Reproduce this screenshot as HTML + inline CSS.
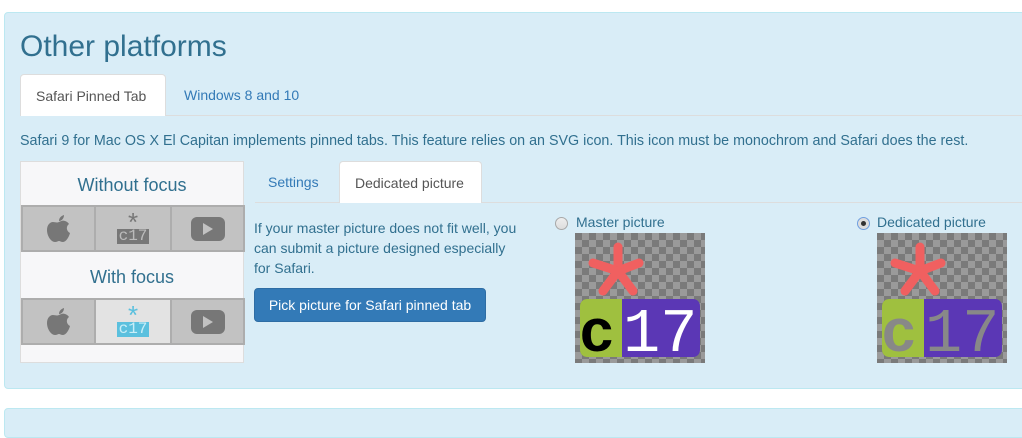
<!DOCTYPE html>
<html><head><style>
*{box-sizing:border-box;margin:0;padding:0}
body{width:1022px;height:414px;background:#fff;font-family:"Liberation Sans",sans-serif;position:relative;overflow:hidden;color:#31708f}
.a{position:absolute}
.panel{left:4px;top:12px;width:1030px;height:377px;background:#d9edf7;border:1px solid #bce8f1;border-radius:4px}
.panel2{left:4px;top:408px;width:1030px;height:30px;background:#d9edf7;border:1px solid #bce8f1;border-radius:4px}
.chk{background-color:#7a7a7a;background-image:linear-gradient(45deg,#9a9a9a 25%,transparent 25%,transparent 75%,#9a9a9a 75%),linear-gradient(45deg,#9a9a9a 25%,transparent 25%,transparent 75%,#9a9a9a 75%);background-size:14px 14px;background-position:0 0,7px 7px;width:130px;height:130px}
.cell{top:0;height:47px;background:#c2c2c2;border:2px solid #adadad;display:flex;align-items:center;justify-content:center}
.radio{width:13px;height:13px;border-radius:50%;border:1px solid #a8a8a8;background:linear-gradient(#eee,#ddd)}
</style></head><body>
<div class="a panel"></div>
<div class="a panel2"></div>
<div class="a" style="left:20px;top:30px;font-size:30px;color:#31708f">Other platforms</div>
<div class="a" style="left:20px;top:115px;width:1010px;height:1px;background:#ddd"></div>
<div class="a" style="left:20px;top:74px;width:146px;height:42px;background:#fff;border:1px solid #ddd;border-bottom:none;border-radius:4px 4px 0 0;font-size:14px;color:#555;padding:13px 0 0 15px">Safari Pinned Tab</div>
<div class="a" style="left:184px;top:87px;font-size:14px;color:#337ab7">Windows 8 and 10</div>
<div class="a" style="left:20px;top:133px;font-size:14.3px;white-space:nowrap">Safari 9 for Mac OS X El Capitan implements pinned tabs. This feature relies on an SVG icon. This icon must be monochrom and Safari does the rest.</div>

<div class="a" style="left:20px;top:161px;width:224px;height:202px;background:#f7f7f9;border:1px solid #ddd">
 <div class="a" style="left:0;top:13px;width:222px;text-align:center;font-size:18px">Without focus</div>
 <div class="a" style="left:0;top:43px;width:222px;height:48px">
  <div class="a cell" style="left:0;width:75px"><svg width="26" height="30" viewBox="0 0 26 30"><path fill="#777" d="M13 8c2-1 4-2 6-1 3 1 4 3 4 3-3 2-3 7 1 9-1 4-4 9-7 9-2 0-3-1-4-1s-2 1-4 1C5 28 1 22 1 16c0-5 3-8 6-8 2 0 4 1 6 0zM13 7c0-3 2-5 5-6 0 3-2 6-5 6z"/></svg></div>
  <div class="a cell" style="left:73px;width:78px;flex-direction:column"><div style="color:#777;font-size:26px;line-height:16px;height:15px">*</div><div style="background:#777;color:#bbb;font:16px 'Liberation Mono',monospace;padding:0 2px;line-height:15px">c17</div></div>
  <div class="a cell" style="left:149px;width:75px"><div style="width:34px;height:24px;background:#777;border-radius:6px;display:flex;align-items:center;justify-content:center"><div style="width:0;height:0;border-left:10px solid #c2c2c2;border-top:6px solid transparent;border-bottom:6px solid transparent"></div></div></div>
 </div>
 <div class="a" style="left:0;top:105px;width:222px;text-align:center;font-size:18px">With focus</div>
 <div class="a" style="left:0;top:136px;width:222px;height:48px">
  <div class="a cell" style="left:0;width:75px"><svg width="26" height="30" viewBox="0 0 26 30"><path fill="#777" d="M13 8c2-1 4-2 6-1 3 1 4 3 4 3-3 2-3 7 1 9-1 4-4 9-7 9-2 0-3-1-4-1s-2 1-4 1C5 28 1 22 1 16c0-5 3-8 6-8 2 0 4 1 6 0zM13 7c0-3 2-5 5-6 0 3-2 6-5 6z"/></svg></div>
  <div class="a cell" style="left:73px;width:78px;flex-direction:column;background:#e3e3e3"><div style="color:#5bc0de;font-size:26px;line-height:16px;height:15px">*</div><div style="background:#5bc0de;color:#c8eef8;font:16px 'Liberation Mono',monospace;padding:0 2px;line-height:15px">c17</div></div>
  <div class="a cell" style="left:149px;width:75px"><div style="width:34px;height:24px;background:#777;border-radius:6px;display:flex;align-items:center;justify-content:center"><div style="width:0;height:0;border-left:10px solid #c2c2c2;border-top:6px solid transparent;border-bottom:6px solid transparent"></div></div></div>
 </div>
</div>

<div class="a" style="left:255px;top:202px;width:780px;height:1px;background:#ddd"></div>
<div class="a" style="left:268px;top:174px;font-size:14px;color:#337ab7">Settings</div>
<div class="a" style="left:339px;top:161px;width:143px;height:42px;background:#fff;border:1px solid #ddd;border-bottom:none;border-radius:4px 4px 0 0;font-size:14px;color:#555;padding:13px 0 0 15px">Dedicated picture</div>
<div class="a" style="left:254px;top:218px;width:290px;font-size:14px;line-height:20px;white-space:nowrap">If your master picture does not fit well, you<br>can submit a picture designed especially<br>for Safari.</div>
<div class="a" style="left:254px;top:288px;width:232px;height:34px;background:#337ab7;border:1px solid #2e6da4;border-radius:4px;color:#fff;font-size:14px;text-align:center;line-height:32px">Pick picture for Safari pinned tab</div>

<div class="a radio" style="left:555px;top:217px"></div>
<div class="a" style="left:576px;top:214px;font-size:14px">Master picture</div>
<div class="a radio" style="left:857px;top:217px;border-color:#6f9fe0;background:#ddd"><div style="width:5px;height:5px;border-radius:50%;background:#333;margin:3px"></div></div>
<div class="a" style="left:877px;top:214px;font-size:14px">Dedicated picture</div>

<div class="a chk" style="left:575px;top:233px">
 <svg width="130" height="130" viewBox="0 0 130 130"><g stroke="#f06060" stroke-width="9" stroke-linecap="round"><line x1="43" y1="14" x2="43" y2="38"/><line x1="43" y1="38" x2="18" y2="30"/><line x1="43" y1="38" x2="64" y2="30"/><line x1="43" y1="38" x2="28" y2="58"/><line x1="43" y1="38" x2="58" y2="58"/></g>
 <rect x="5" y="66" width="120" height="58" rx="7" fill="#5b37b5"/><path d="M12 66h35v58H12a7 7 0 0 1-7-7V73a7 7 0 0 1 7-7z" fill="#9fc03f"/>
 <text x="4" y="118" font-family="Liberation Mono" font-size="60" font-weight="bold" fill="#000">c</text><text x="48" y="118" font-family="Liberation Mono" font-size="62" fill="#fff">17</text></svg>
</div>
<div class="a chk" style="left:877px;top:233px">
 <svg width="130" height="130" viewBox="0 0 130 130"><g stroke="#f06060" stroke-width="9" stroke-linecap="round"><line x1="43" y1="14" x2="43" y2="38"/><line x1="43" y1="38" x2="18" y2="30"/><line x1="43" y1="38" x2="64" y2="30"/><line x1="43" y1="38" x2="28" y2="58"/><line x1="43" y1="38" x2="58" y2="58"/></g>
 <rect x="5" y="66" width="120" height="58" rx="7" fill="#5b37b5"/><path d="M12 66h35v58H12a7 7 0 0 1-7-7V73a7 7 0 0 1 7-7z" fill="#9fc03f"/>
 <text x="4" y="118" font-family="Liberation Mono" font-size="60" font-weight="bold" fill="#888">c</text><text x="48" y="118" font-family="Liberation Mono" font-size="62" fill="#888">17</text></svg>
</div>
</body></html>
